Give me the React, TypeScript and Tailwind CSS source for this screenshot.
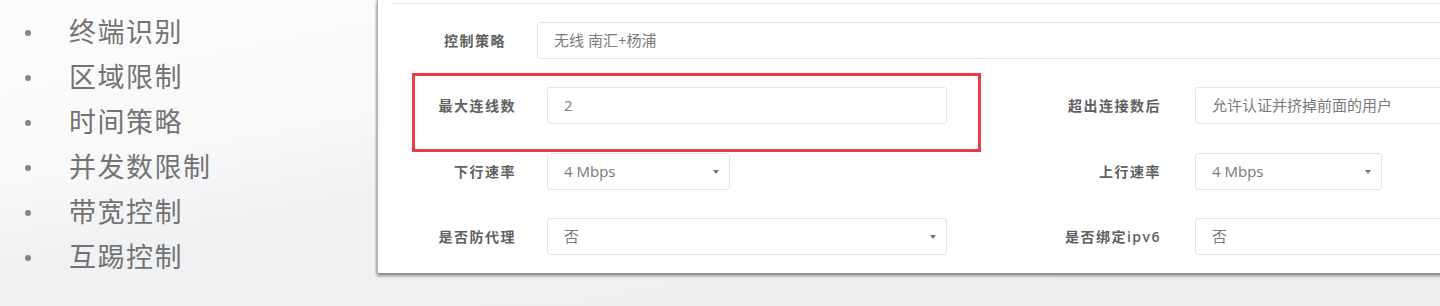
import React from 'react'

const features = ['终端识别', '区域限制', '时间策略', '并发数限制', '带宽控制', '互踢控制']

const cjk = "font-['Open_Sans','Noto_Sans_CJK_SC',sans-serif]"

// little filled triangle used by the selects
const Caret = () => (
  <span className="ml-auto mr-[10px] h-0 w-0 border-x-[3px] border-t-[4px] border-x-transparent border-t-[#707070]" />
)

interface FieldProps {
  value: string
  select?: boolean
  width?: string
}

const Field = ({ value, select, width = 'w-full' }: FieldProps) => (
  <div
    className={`flex h-[37px] ${width} items-center rounded-[3px] border border-[#dfe4ea] bg-white pl-[16px] text-[15px] text-[#7a7a7a]`}
  >
    <span>{value}</span>
    {select && <Caret />}
  </div>
)

const Label = ({ text, width }: { text: string; width: string }) => (
  <div className={`${width} shrink-0 text-right text-[14px] font-semibold tracking-[1.5px] text-[#606060]`}>{text}</div>
)

export default function App() {
  return (
    <div
      className={`flex h-[306px] w-[1440px] overflow-hidden bg-[linear-gradient(169deg,#fcfcfd_0%,#f9f9fa_30%,#f0f1f3_45%,#ededf0_100%)] ${cjk}`}
    >
      {/* feature list on the slide */}
      <ul className="w-[377px] shrink-0 pt-[10px] pl-[25px]">
        {features.map((f) => (
          <li key={f} className="flex h-[45px] items-center">
            <span className="h-[6px] w-[6px] rounded-full bg-[#858585]" />
            <span className="ml-[38px] text-[27px] tracking-[1.5px] text-[#737373]">{f}</span>
          </li>
        ))}
      </ul>

      {/* form panel screenshot */}
      <div className="relative h-[273px] w-[1100px] shrink-0 border-l border-[#b0b0b0] bg-white pl-[15px] shadow-[0_3px_3px_rgba(0,0,0,0.4),-1px_0_2px_rgba(0,0,0,0.15)]">
        <div className="h-[4px] border-b border-[#e4e8ed]" />

        <div className="mt-[18px] flex items-center">
          <Label text="控制策略" width="w-[113px]" />
          <div className="ml-[31px] flex-1">
            <Field value="无线 南汇+杨浦" />
          </div>
        </div>

        <div className="mt-[28px] flex items-center">
          <Label text="最大连线数" width="w-[123px]" />
          <div className="ml-[31px] w-[400px]">
            <Field value="2" />
          </div>
          <Label text="超出连接数后" width="w-[214px]" />
          <div className="ml-[34px] flex-1">
            <Field value="允许认证并挤掉前面的用户" />
          </div>
        </div>

        <div className="mt-[29px] flex items-center">
          <Label text="下行速率" width="w-[123px]" />
          <div className="ml-[31px] w-[400px]">
            <Field value="4 Mbps" select width="w-[183px]" />
          </div>
          <Label text="上行速率" width="w-[214px]" />
          <div className="ml-[34px] flex-1">
            <Field value="4 Mbps" select width="w-[187px]" />
          </div>
        </div>

        <div className="mt-[28px] flex items-center">
          <Label text="是否防代理" width="w-[123px]" />
          <div className="ml-[31px] w-[400px]">
            <Field value="否" select />
          </div>
          <Label text="是否绑定ipv6" width="w-[214px]" />
          <div className="ml-[34px] flex-1">
            <Field value="否" />
          </div>
        </div>

        {/* red highlight annotation */}
        <div className="absolute top-[73px] left-[34px] h-[79px] w-[569px] border-[3px] border-[#ee3a44]" />
      </div>
    </div>
  )
}
